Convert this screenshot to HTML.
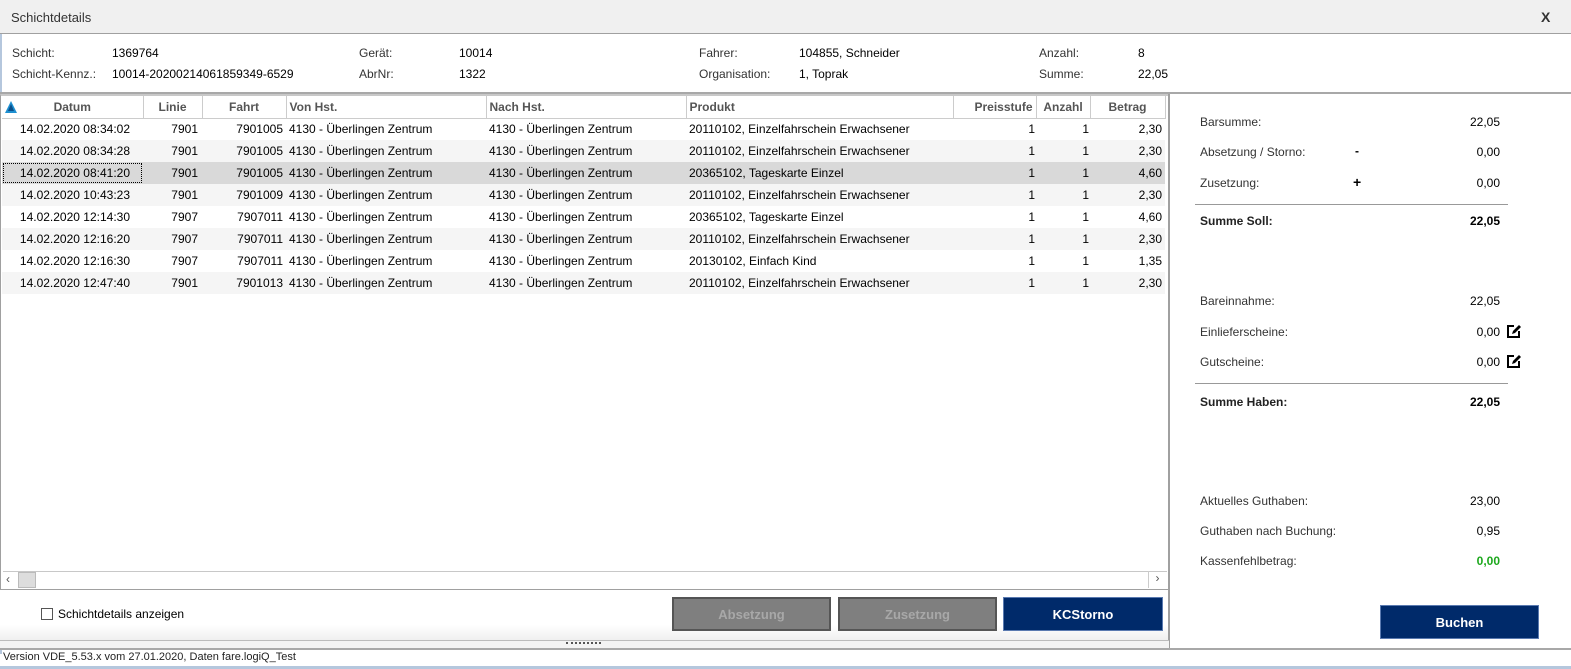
<!DOCTYPE html>
<html><head><meta charset="utf-8"><style>
*{margin:0;padding:0;box-sizing:border-box}
body{width:1571px;height:669px;overflow:hidden;background:#fff;font-family:"Liberation Sans",Arial,sans-serif;font-size:12px;color:#000;position:relative}
.a{position:absolute;white-space:nowrap}
.g{color:#333}
.r{text-align:right}
table{border-collapse:collapse;table-layout:fixed;position:absolute;left:2px;top:96px}
td{height:22px;padding:0 3px;white-space:nowrap;overflow:hidden}
th{height:22px;font-weight:bold;color:#555;font-size:12px;border-right:1px solid #ccc;border-bottom:1px solid #ccc;padding:0 3px;white-space:nowrap}
.btn{position:absolute;height:34px;font-weight:bold;font-size:13px;display:flex;align-items:center;justify-content:center}
.gr{background:#7f7f7f;color:#a8a8a8;border:2px solid #555}
.bl{background:#002a6a;color:#fff;border:1px solid #5a7ab0}
td.l2{padding-right:4px}
td.p0{padding-right:1px}
</style></head><body>
<div class="a" style="left:0;top:0;width:1571px;height:34px;background:#f0f0f0;border-bottom:1px solid #a0a0a0"></div>
<div class="a" style="left:11px;top:10px;font-size:13px;color:#333">Schichtdetails</div>
<div class="a" style="left:1541px;top:9px;font-size:14px;font-weight:bold;color:#333">X</div>
<div class="a" style="left:0;top:34px;width:2px;height:620px;background:#b5c7dd"></div>

<div class="a g" style="left:12px;top:46px">Schicht:</div><div class="a" style="left:112px;top:46px">1369764</div>
<div class="a g" style="left:12px;top:67px">Schicht-Kennz.:</div><div class="a" style="left:112px;top:67px">10014-20200214061859349-6529</div>
<div class="a g" style="left:359px;top:46px">Gerät:</div><div class="a" style="left:459px;top:46px">10014</div>
<div class="a g" style="left:359px;top:67px">AbrNr:</div><div class="a" style="left:459px;top:67px">1322</div>
<div class="a g" style="left:699px;top:46px">Fahrer:</div><div class="a" style="left:799px;top:46px">104855, Schneider</div>
<div class="a g" style="left:699px;top:67px">Organisation:</div><div class="a" style="left:799px;top:67px">1, Toprak</div>
<div class="a g" style="left:1039px;top:46px">Anzahl:</div><div class="a" style="left:1138px;top:46px">8</div>
<div class="a g" style="left:1039px;top:67px">Summe:</div><div class="a" style="left:1138px;top:67px">22,05</div>
<div class="a" style="left:0;top:92px;width:1571px;height:2px;background:#a8a8a8"></div>

<div class="a" style="left:0;top:94px;width:1169px;height:496px;border:1px solid #a0a0a0;border-top:2px solid #c8c8c8;background:#fff"></div>
<div class="a" style="left:1168px;top:94px;width:2px;height:556px;background:#a0a0a0"></div>
<table>
<colgroup><col style="width:141px"><col style="width:59px"><col style="width:84px"><col style="width:200px"><col style="width:200px"><col style="width:267px"><col style="width:83px"><col style="width:54px"><col style="width:75px"></colgroup>
<tr><th style="text-align:center;position:relative"><svg style="position:absolute;left:3px;top:5px" width="12" height="12"><polygon points="6,0 12,12 0,12" fill="#1e8fd0"/><polygon points="6,3 9,10 3,10" fill="#0a4e8a"/></svg>Datum</th><th>Linie</th><th>Fahrt</th><th style="text-align:left">Von Hst.</th><th style="text-align:left">Nach Hst.</th><th style="text-align:left">Produkt</th><th class="r">Preisstufe</th><th>Anzahl</th><th>Betrag</th></tr>
<tr><td class="r" style="padding-right:13px">14.02.2020 08:34:02</td><td class="r l2">7901</td><td class="r">7901005</td><td>4130 - Überlingen Zentrum</td><td>4130 - Überlingen Zentrum</td><td>20110102, Einzelfahrschein Erwachsener</td><td class="r p0">1</td><td class="r p0">1</td><td class="r">2,30</td></tr>
<tr style="background:#f5f5f5"><td class="r" style="padding-right:13px">14.02.2020 08:34:28</td><td class="r l2">7901</td><td class="r">7901005</td><td>4130 - Überlingen Zentrum</td><td>4130 - Überlingen Zentrum</td><td>20110102, Einzelfahrschein Erwachsener</td><td class="r p0">1</td><td class="r p0">1</td><td class="r">2,30</td></tr>
<tr style="background:#d9d9d9"><td class="r" style="padding-right:13px;outline:1px dotted #000;outline-offset:-2px">14.02.2020 08:41:20</td><td class="r l2">7901</td><td class="r">7901005</td><td>4130 - Überlingen Zentrum</td><td>4130 - Überlingen Zentrum</td><td>20365102, Tageskarte Einzel</td><td class="r p0">1</td><td class="r p0">1</td><td class="r">4,60</td></tr>
<tr style="background:#f5f5f5"><td class="r" style="padding-right:13px">14.02.2020 10:43:23</td><td class="r l2">7901</td><td class="r">7901009</td><td>4130 - Überlingen Zentrum</td><td>4130 - Überlingen Zentrum</td><td>20110102, Einzelfahrschein Erwachsener</td><td class="r p0">1</td><td class="r p0">1</td><td class="r">2,30</td></tr>
<tr><td class="r" style="padding-right:13px">14.02.2020 12:14:30</td><td class="r l2">7907</td><td class="r">7907011</td><td>4130 - Überlingen Zentrum</td><td>4130 - Überlingen Zentrum</td><td>20365102, Tageskarte Einzel</td><td class="r p0">1</td><td class="r p0">1</td><td class="r">4,60</td></tr>
<tr style="background:#f5f5f5"><td class="r" style="padding-right:13px">14.02.2020 12:16:20</td><td class="r l2">7907</td><td class="r">7907011</td><td>4130 - Überlingen Zentrum</td><td>4130 - Überlingen Zentrum</td><td>20110102, Einzelfahrschein Erwachsener</td><td class="r p0">1</td><td class="r p0">1</td><td class="r">2,30</td></tr>
<tr><td class="r" style="padding-right:13px">14.02.2020 12:16:30</td><td class="r l2">7907</td><td class="r">7907011</td><td>4130 - Überlingen Zentrum</td><td>4130 - Überlingen Zentrum</td><td>20130102, Einfach Kind</td><td class="r p0">1</td><td class="r p0">1</td><td class="r">1,35</td></tr>
<tr style="background:#f5f5f5"><td class="r" style="padding-right:13px">14.02.2020 12:47:40</td><td class="r l2">7901</td><td class="r">7901013</td><td>4130 - Überlingen Zentrum</td><td>4130 - Überlingen Zentrum</td><td>20110102, Einzelfahrschein Erwachsener</td><td class="r p0">1</td><td class="r p0">1</td><td class="r">2,30</td></tr>
</table>
<div class="a" style="left:3px;top:571px;width:1164px;height:17px;border-top:1px solid #c8c8c8;background:#fff"></div>
<div class="a" style="left:6px;top:572px;color:#555">&lsaquo;</div>
<div class="a" style="left:18px;top:572px;width:18px;height:16px;background:#ddd;border:1px solid #bbb"></div>
<div class="a" style="left:1148px;top:571px;width:18px;height:17px;border-left:1px solid #ccc;color:#555;text-align:center">&rsaquo;</div>

<div class="a" style="left:0;top:590px;width:1168px;height:50px;background:linear-gradient(#fff 70%,#f0f0f0)"></div>
<div class="a" style="left:41px;top:608px;width:12px;height:12px;border:1px solid #555;background:#fff"></div>
<div class="a" style="left:58px;top:607px">Schichtdetails anzeigen</div>
<div class="btn gr" style="left:672px;top:597px;width:159px">Absetzung</div>
<div class="btn gr" style="left:838px;top:597px;width:159px">Zusetzung</div>
<div class="btn bl" style="left:1003px;top:597px;width:160px">KCStorno</div>

<div class="a" style="left:0;top:640px;width:1169px;height:1px;background:#bbb"></div>
<div class="a" style="left:0;top:641px;width:1169px;height:8px;background:#f3f3f3"></div>
<div class="a" style="left:566px;top:642px;width:35px;height:2px;border-top:2px dotted #555"></div>
<div class="a" style="left:0;top:648px;width:1571px;height:2px;background:#a8a8a8"></div>
<div class="a" style="left:3px;top:651px;font-size:11px;color:#222">Version VDE_5.53.x vom 27.01.2020, Daten fare.logiQ_Test</div>
<div class="a" style="left:0;top:666px;width:1571px;height:3px;background:#b5c7dd"></div>

<div class="a g" style="left:1200px;top:115px">Barsumme:</div><div class="a r" style="left:1400px;top:115px;width:100px">22,05</div>
<div class="a g" style="left:1200px;top:145px">Absetzung / Storno:</div><div class="a" style="left:1355px;top:144px;font-weight:bold">-</div><div class="a r" style="left:1400px;top:145px;width:100px">0,00</div>
<div class="a g" style="left:1200px;top:176px">Zusetzung:</div><div class="a" style="left:1353px;top:174px;font-weight:bold;font-size:14px">+</div><div class="a r" style="left:1400px;top:176px;width:100px">0,00</div>
<div class="a" style="left:1195px;top:204px;width:313px;height:1px;background:#999"></div>
<div class="a" style="left:1200px;top:214px;font-weight:bold;color:#222">Summe Soll:</div><div class="a r" style="left:1400px;top:214px;width:100px;font-weight:bold">22,05</div>

<div class="a g" style="left:1200px;top:294px">Bareinnahme:</div><div class="a r" style="left:1400px;top:294px;width:100px">22,05</div>
<div class="a g" style="left:1200px;top:325px">Einlieferscheine:</div><div class="a r" style="left:1400px;top:325px;width:100px">0,00</div>
<div class="a g" style="left:1200px;top:355px">Gutscheine:</div><div class="a r" style="left:1400px;top:355px;width:100px">0,00</div>
<svg class="a" style="left:1506px;top:324px" width="15" height="15"><path d="M8 2H2V13H13V7" fill="none" stroke="#000" stroke-width="2"/><path d="M6 10L7 7L13 1L15 3L9 9Z" fill="#000"/></svg>
<svg class="a" style="left:1506px;top:354px" width="15" height="15"><path d="M8 2H2V13H13V7" fill="none" stroke="#000" stroke-width="2"/><path d="M6 10L7 7L13 1L15 3L9 9Z" fill="#000"/></svg>
<div class="a" style="left:1195px;top:383px;width:313px;height:1px;background:#999"></div>
<div class="a" style="left:1200px;top:395px;font-weight:bold;color:#222">Summe Haben:</div><div class="a r" style="left:1400px;top:395px;width:100px;font-weight:bold">22,05</div>

<div class="a g" style="left:1200px;top:494px">Aktuelles Guthaben:</div><div class="a r" style="left:1400px;top:494px;width:100px">23,00</div>
<div class="a g" style="left:1200px;top:524px">Guthaben nach Buchung:</div><div class="a r" style="left:1400px;top:524px;width:100px">0,95</div>
<div class="a g" style="left:1200px;top:554px">Kassenfehlbetrag:</div><div class="a r" style="left:1400px;top:554px;width:100px;color:#1ca81c;font-weight:bold">0,00</div>
<div class="btn bl" style="left:1380px;top:605px;width:159px">Buchen</div>
</body></html>
